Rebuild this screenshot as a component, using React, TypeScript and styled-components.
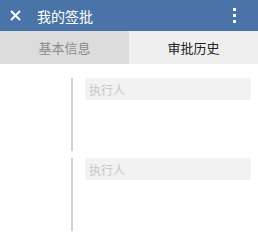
import React, { useState } from "react";
import styled, { createGlobalStyle } from "styled-components";

const GlobalStyle = createGlobalStyle`
  html, body {
    margin: 0;
    padding: 0;
    background: #ffffff;
    font-family: "Noto Sans CJK SC", "Noto Sans", sans-serif;
  }
`;

const Header = styled.div`
  height: 31px;
  background-color: #4a74a8;
  display: flex;
  align-items: center;
  padding: 0 22px 0 10px;
  box-sizing: border-box;
  color: #ffffff;
`;

const Title = styled.div`
  flex: 1;
  margin-left: 16px;
  font-size: 14px;
  line-height: 1;
`;

const Tabs = styled.div`
  display: flex;
  height: 33px;
`;

const Tab = styled.div<{ $active?: boolean }>`
  flex: 1;
  display: flex;
  align-items: center;
  justify-content: center;
  font-size: 13px;
  background-color: ${(p) => (p.$active ? "#efefef" : "#dcdcdc")};
  color: ${(p) => (p.$active ? "#222222" : "#8a8a8a")};
`;

const List = styled.div`
  padding-top: 14px;
  display: flex;
  flex-direction: column;
  gap: 7px;
`;

const Item = styled.div`
  height: 73px;
  margin-left: 71px;
  border-left: 2px solid #d2d2d2;
  padding-left: 12px;
  padding-right: 7px;
`;

const Field = styled.div`
  height: 22px;
  background-color: #f2f2f2;
  color: #c6c6c6;
  font-size: 12px;
  display: flex;
  align-items: center;
  padding-left: 4px;
`;

const Close = () => (
  <svg width="11" height="11" viewBox="0 0 11 11">
    <path d="M1 1 L10 10 M10 1 L1 10" stroke="#fff" strokeWidth="1.8" />
  </svg>
);

const More = () => (
  <svg width="3" height="15" viewBox="0 0 3 15">
    <rect x="0" y="0" width="3" height="3" fill="#fff" />
    <rect x="0" y="6" width="3" height="3" fill="#fff" />
    <rect x="0" y="12" width="3" height="3" fill="#fff" />
  </svg>
);

export default function App() {
  const [tab, setTab] = useState(1);
  const items = ["执行人", "执行人"];
  return (
    <>
      <GlobalStyle />
      <Header>
        <Close />
        <Title>我的签批</Title>
        <More />
      </Header>
      <Tabs>
        <Tab $active={tab === 0} onClick={() => setTab(0)}>基本信息</Tab>
        <Tab $active={tab === 1} onClick={() => setTab(1)}>审批历史</Tab>
      </Tabs>
      <List>
        {items.map((t, i) => (
          <Item key={i}>
            <Field>{t}</Field>
          </Item>
        ))}
      </List>
    </>
  );
}
